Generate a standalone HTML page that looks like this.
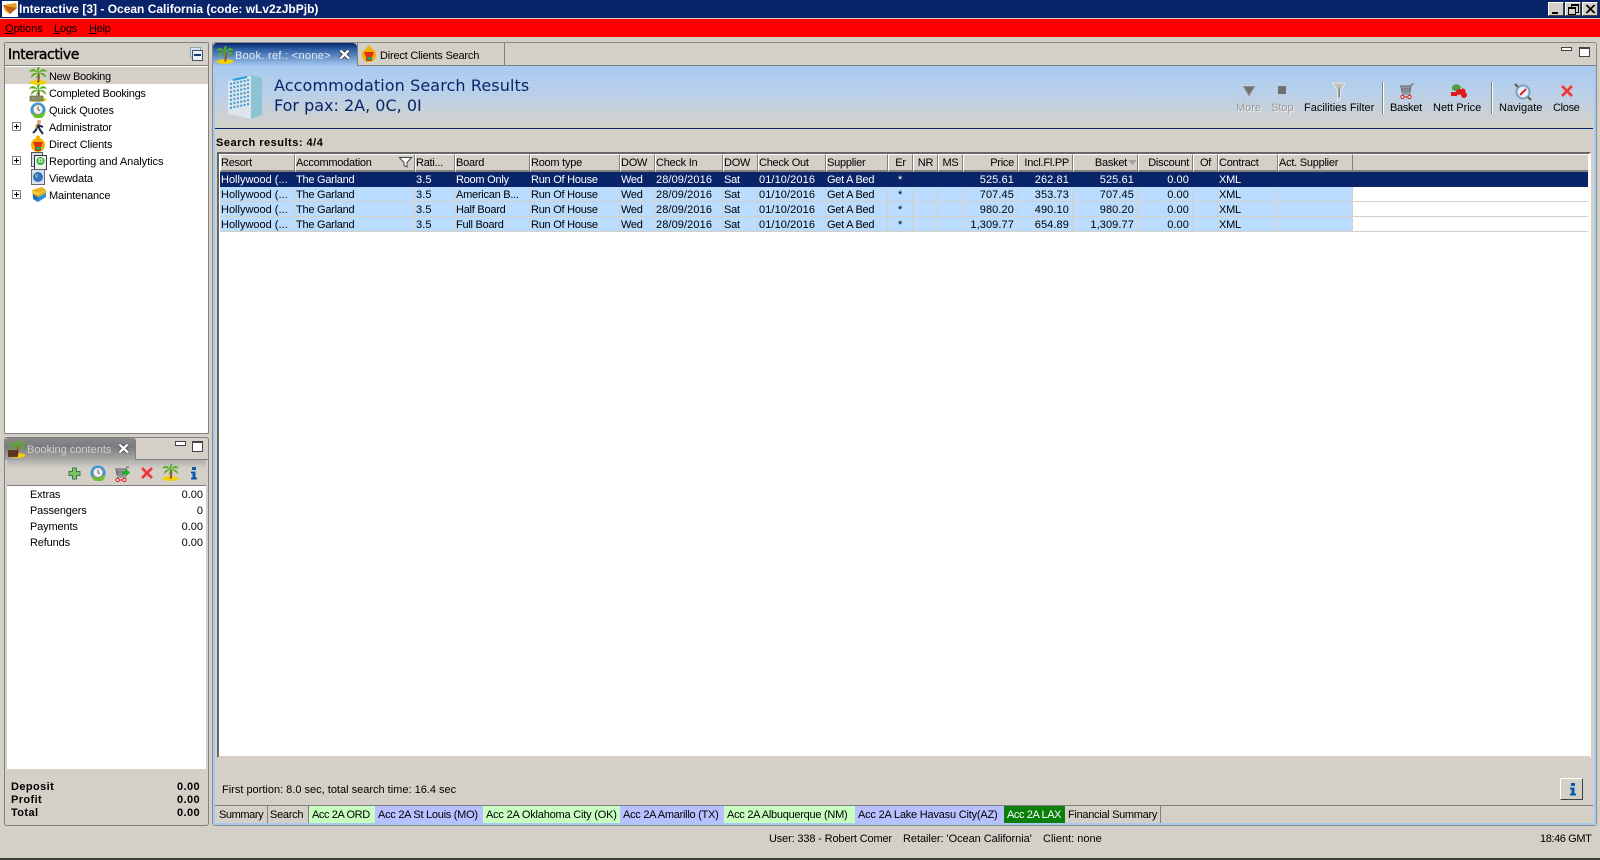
<!DOCTYPE html>
<html><head><meta charset="utf-8"><title>Interactive</title>
<style>
html,body{margin:0;padding:0;width:1600px;height:860px;overflow:hidden;background:#d4d0c8}
body{position:relative;font:11px "Liberation Sans",Arial,sans-serif;color:#000}
.a{position:absolute}
.t{position:absolute;white-space:nowrap;line-height:14px;height:14px;margin-top:1px}
.tr{letter-spacing:-.15px}
.tn{letter-spacing:-.27px}
.b{font-weight:bold}
.r{text-align:right}
svg{position:absolute;overflow:visible}
table{position:absolute;left:220px;top:154px;border-collapse:separate;border-spacing:0;table-layout:fixed;width:1133px;font:11px "Liberation Sans",Arial,sans-serif}
th{font-weight:normal;text-align:left;background:#d4d0c8;border-top:1px solid #fff;border-left:1px solid #fff;border-right:1px solid #808080;border-bottom:2px solid #808080;padding:2px 0 0 0;white-space:nowrap;overflow:hidden;box-sizing:border-box;height:18px;line-height:13px;letter-spacing:-.25px}
td{height:15px;box-sizing:border-box;background:#b9dcff;border-right:1px solid #d4d0c8;border-bottom:1px solid #d4d0c8;padding:2px 0 0 1px;white-space:nowrap;overflow:hidden;line-height:12px;letter-spacing:-.25px}
tr.s td{background:#0a246a;color:#fff;border-color:#0a246a}
td.d,td.n{letter-spacing:.1px}
td.h{letter-spacing:0}
td.n{text-align:right;padding:2px 3px 0 0}
th.n{text-align:right;padding:2px 3px 0 0}
td.c,th.c{text-align:center;padding:2px 0 0 0}
.wb{position:absolute;top:2px;width:16px;height:14px;box-sizing:border-box;background:#d4d0c8;border:1px solid;border-color:#fff #404040 #404040 #fff}
.bt{position:absolute;top:806px;height:17px;line-height:18px;box-sizing:border-box;padding-left:3px;white-space:nowrap;letter-spacing:-.27px}
.bt.g{background:#c8ffc0}
.bt.p{background:#b8c0ff}
.bt.l{border-right:1px solid #808080}
</style></head><body>
<svg width="0" height="0" style="position:absolute"><defs>
<symbol id="palm" viewBox="0 0 18 18"><ellipse cx="9" cy="15.500" rx="8.500" ry="2.400" fill="#f4d000"/><path d="M9.500 6C10 10 10 13 9 15.500" stroke="#8a5a20" stroke-width="2" fill="none"/><path d="M9.500 6C6 1 2 1 0 5 3 4 6 4 9.500 6ZM9.500 6C7 2 8 0 11 0 10 2 10 4 9.500 6ZM9.500 6C12 1 16 1 18 5 15 4 12 4 9.500 6ZM9.500 6C5 5 2 7 2 11 5 8 7 7 9.500 6ZM9.500 6C14 5 17 7 17 11 14 8 12 7 9.500 6ZM9.500 6C8 8 7 10 7 12 9 10 9.500 8 9.500 6Z" fill="#58ad20"/></symbol>
<symbol id="clock" viewBox="0 0 18 18"><circle cx="9" cy="9" r="8.500" fill="#2f9be8"/><path d="M2 12A7.500 7.500 0 0 0 17 11L13 13 9 15Z" fill="#6cc22a"/><circle cx="9" cy="8.500" r="5.600" fill="#f2f2f2" stroke="#888"/><path d="M9 5V8.500L11 10" stroke="#444" fill="none"/></symbol>
<symbol id="x" viewBox="0 0 14 14"><path d="M3 1 7 5 11 1 13 3 9 7 13 11 11 13 7 9 3 13 1 11 5 7 1 3Z" fill="#e8323c" stroke="#f08a8a" stroke-width=".7"/></symbol>
<symbol id="cart" viewBox="0 0 16 16"><path d="M1 3H12M2 3 3 9H11L12 3 13 1H15M4 3V9M6 3V9M8 3V9M10 3V9M2 6H12M3 11H12" stroke="#666" fill="none"/><circle cx="3.500" cy="14" r="1.600" fill="#fff" stroke="#e01010"/><circle cx="10.500" cy="14" r="1.600" fill="#fff" stroke="#e01010"/><path d="M5 14H9" stroke="#e01010"/></symbol>
<symbol id="client" viewBox="0 0 16 18"><circle cx="8" cy="10" r="7" fill="#f4b000"/><circle cx="8" cy="2.500" r="2" fill="#f4b000"/><path d="M3 7H13L11.500 11H4.500Z" fill="#e03010"/><path d="M5 11H11V16H5Z" fill="#e03010"/><rect x="6" y="12" width="5" height="3" fill="#20a060"/></symbol>
<symbol id="doc" viewBox="0 0 16 18"><rect x=".5" y=".5" width="11" height="14" fill="#d8dce8" stroke="#555"/><rect x="3.500" y="3.500" width="12" height="14" fill="#e8f0e8" stroke="#334"/><circle cx="9.500" cy="9" r="4" fill="#30b030"/><path d="M8 7H11V10H8ZM6 14H13" stroke="#fff" fill="none"/></symbol>
</defs></svg>

<!-- title bar -->
<div class="a" style="left:0;top:0;width:1600px;height:18px;background:#0a246a"></div>
<svg style="left:2px;top:1px" width="16" height="16"><rect width="16" height="16" fill="#fff"/><path d="M1 4 14 2 15 7 8 13 3 10Z" fill="#e8a020"/><path d="M1 4 9 6 15 7 8 13Z" fill="#c06010"/></svg>
<div class="t b" style="left:19px;top:2px;color:#fff;font-size:12px;margin-top:0">Interactive [3] - Ocean California (code: wLv2zJbPjb)</div>
<div class="wb" style="left:1548px"><div class="a" style="left:3px;top:9px;width:6px;height:2px;background:#000"></div></div>
<div class="wb" style="left:1565px"><div class="a" style="left:5px;top:1px;width:6px;height:6px;border:1px solid #000;border-top-width:2px"></div><div class="a" style="left:2px;top:4px;width:6px;height:5px;border:1px solid #000;border-top-width:2px;background:#d4d0c8"></div></div>
<div class="wb" style="left:1582px"><svg style="left:3px;top:2px" width="9" height="8"><path d="M0 0 8 8M1 0 9 8M8 0 0 8M9 0 1 8" stroke="#000"/></svg></div>

<!-- menu bar -->
<div class="a" style="left:0;top:18px;width:1600px;height:1px;background:#d4d0c8"></div>
<div class="a" style="left:0;top:19px;width:1600px;height:18px;background:#f00"></div>
<div class="t" style="left:5px;top:21px"><u>O</u>ptions</div>
<div class="t" style="left:54px;top:21px;letter-spacing:-.2px"><u>L</u>ogs</div>
<div class="t" style="left:89px;top:21px;letter-spacing:-.3px"><u>H</u>elp</div>

<!-- Interactive panel -->
<div class="a" style="left:4px;top:42px;width:205px;height:392px;box-sizing:border-box;border:1px solid #808080;border-radius:2px;background:#fff"></div>
<div class="a" style="left:5px;top:43px;width:203px;height:22px;background:#d4d0c8;border-bottom:1px solid #808080"></div>
<div class="t" style="left:8px;top:47px;font-size:14px;line-height:14px;font-family:'DejaVu Sans',sans-serif;-webkit-text-stroke:.4px #000;letter-spacing:-.4px">Interactive</div>
<svg style="left:190px;top:47px" width="14" height="15"><rect x=".5" y=".5" width="10" height="10" fill="#d4e4f4" stroke="#8aa"/><rect x="2.500" y="3.500" width="10" height="10" fill="#e8f0f8" stroke="#456"/><path d="M4 8H11" stroke="#103a70" stroke-width="2"/></svg>
<div class="a" style="left:5px;top:67px;width:203px;height:17px;background:#d4d0c8"></div>
<div class="t tn" style="left:49px;top:69px">New Booking</div>
<div class="t tn" style="left:49px;top:86px">Completed Bookings</div>
<div class="t tr" style="left:49px;top:103px">Quick Quotes</div>
<div class="t tr" style="left:49px;top:120px">Administrator</div>
<div class="t tr" style="left:49px;top:137px">Direct Clients</div>
<div class="t" style="left:49px;top:154px;letter-spacing:-.05px">Reporting and Analytics</div>
<div class="t tr" style="left:49px;top:171px">Viewdata</div>
<div class="t tr" style="left:49px;top:188px">Maintenance</div>
<svg width="18" height="18" style="left:29px;top:67px"><use href="#palm"/></svg>
<svg width="18" height="18" style="left:29px;top:84px"><use href="#palm"/><rect x="1" y="12" width="13" height="5" fill="#8c9060" stroke="#555" stroke-width=".6"/></svg>
<svg width="16" height="16" style="left:30px;top:102px"><use href="#clock"/></svg>
<svg width="16" height="17" style="left:31px;top:119px"><circle cx="8" cy="3" r="2" fill="#e0a070"/><path d="M7 5 5 11 2 14M7 6 9 11 12 15M7 6 12 8" stroke="#1a2a50" stroke-width="2" fill="none"/><path d="M4 6 7 5 5 10Z" fill="#e0b030"/></svg>
<svg width="16" height="18" style="left:30px;top:135px"><use href="#client"/></svg>
<svg width="16" height="18" style="left:31px;top:152px"><use href="#doc"/></svg>
<svg width="15" height="16" style="left:31px;top:169px"><rect x=".5" y=".5" width="13" height="15" fill="#dce0ec" stroke="#667"/><circle cx="7" cy="8" r="5" fill="#3070c8"/><path d="M4 6C6 4 8 6 7 8S4 9 4 6Z" fill="#70b060"/></svg>
<svg width="16" height="17" style="left:31px;top:186px"><path d="M1 4 11 1 15 4 15 10 7 15 2 12Z" fill="#e8b020"/><path d="M1 4 7 7 15 4 7 9 2 7Z" fill="#f8d040"/><path d="M2 8 7 11V16L2 13Z" fill="#2070c0"/><path d="M7 11 15 7V11L7 16Z" fill="#3090d0"/></svg>
<!-- tree expanders -->
<div class="a" style="left:12px;top:122px;width:9px;height:9px;box-sizing:border-box;border:1px solid #808080;background:linear-gradient(#000,#000) center/5px 1px no-repeat,linear-gradient(#000,#000) center/1px 5px no-repeat,#fff"></div>
<div class="a" style="left:12px;top:156px;width:9px;height:9px;box-sizing:border-box;border:1px solid #808080;background:linear-gradient(#000,#000) center/5px 1px no-repeat,linear-gradient(#000,#000) center/1px 5px no-repeat,#fff"></div>
<div class="a" style="left:12px;top:190px;width:9px;height:9px;box-sizing:border-box;border:1px solid #808080;background:linear-gradient(#000,#000) center/5px 1px no-repeat,linear-gradient(#000,#000) center/1px 5px no-repeat,#fff"></div>

<!-- Booking contents panel -->
<div class="a" style="left:4px;top:437px;width:205px;height:389px;box-sizing:border-box;border:1px solid #808080;border-radius:3px;background:#d4d0c8"></div>
<div class="a" style="left:135px;top:459px;width:73px;height:1px;background:#808080"></div>
<div class="a" style="left:5px;top:438px;width:130px;height:22px;background:linear-gradient(#8a8a8e,#7c7c80 40%,#a9a8a6);border-radius:3px 3px 0 0;border-right:1px solid #808080"></div>
<div class="a" style="left:7px;top:460px;width:199px;height:26px;background:linear-gradient(#b0afad,#d4d0c8 35%);border-bottom:1px solid #808080;box-sizing:border-box"></div>
<div class="t" style="left:27px;top:442px;color:#d4d0c8">Booking contents</div>
<svg width="18" height="18" style="left:8px;top:440px"><use href="#palm"/><rect x="0" y="10" width="10" height="7" rx="1" fill="#5c3420"/></svg>
<svg width="12" height="11" style="left:118px;top:443px"><path d="M1.500 1.500 10 9.500M9.500 1.500 1.500 9.500" stroke="#444" stroke-width="4"/><path d="M1.500 1.500 10 9.500M9.500 1.500 1.500 9.500" stroke="#fff" stroke-width="2.400"/></svg>
<div class="a" style="left:175px;top:441px;width:9px;height:3px;background:#fff;border:1px solid #444"></div>
<div class="a" style="left:192px;top:441px;width:9px;height:8px;box-sizing:content-box;background:#fff;border:1px solid #444;border-top-width:2px"></div>
<svg width="13" height="13" style="left:68px;top:467px"><path d="M4.500 1H8.500V4.500H12V8.500H8.500V12H4.500V8.500H1V4.500H4.500Z" fill="#80c060" stroke="#3a7a50"/></svg>
<svg width="16" height="16" style="left:90px;top:465px"><use href="#clock"/></svg>
<svg width="16" height="16" style="left:114px;top:466px"><use href="#cart"/><path d="M8 5H12V2.500L16 6.500 12 10.500V8H8Z" fill="#20b030"/></svg>
<svg width="14" height="14" style="left:140px;top:466px"><use href="#x"/></svg>
<svg width="17" height="17" style="left:162px;top:464px"><use href="#palm"/></svg>
<svg width="8" height="14" style="left:190px;top:466px"><path d="M2 1H6V4H2ZM1 5.500H5.500V11.500H7V13.500H1V11.500H2.500V7.500H1Z" fill="#0a5aa8"/></svg>
<div class="a" style="left:7px;top:486px;width:199px;height:283px;background:#fff"></div>
<div class="t tr" style="left:30px;top:487px">Extras</div><div class="t" style="right:1397px;top:487px">0.00</div>
<div class="t tr" style="left:30px;top:503px">Passengers</div><div class="t" style="right:1397px;top:503px">0</div>
<div class="t tr" style="left:30px;top:519px">Payments</div><div class="t" style="right:1397px;top:519px">0.00</div>
<div class="t tr" style="left:30px;top:535px">Refunds</div><div class="t" style="right:1397px;top:535px">0.00</div>
<div class="t b" style="left:11px;top:779px;letter-spacing:.4px">Deposit</div><div class="t b" style="right:1400px;top:779px;letter-spacing:.4px">0.00</div>
<div class="t b" style="left:11px;top:792px;letter-spacing:.4px">Profit</div><div class="t b" style="right:1400px;top:792px;letter-spacing:.4px">0.00</div>
<div class="t b" style="left:11px;top:805px;letter-spacing:.4px">Total</div><div class="t b" style="right:1400px;top:805px;letter-spacing:.4px">0.00</div>

<!-- Main panel -->
<div class="a" style="left:212px;top:42px;width:1385px;height:784px;box-sizing:border-box;border:1px solid #8c8a85;border-radius:3px;background:#d4d0c8"></div>
<div class="a" style="left:213px;top:65px;width:1383px;height:1px;background:#808080"></div>
<div class="a" style="left:213px;top:66px;width:2px;height:759px;background:#a6caf0"></div>
<div class="a" style="left:1594px;top:66px;width:2px;height:759px;background:#a6caf0"></div>
<div class="a" style="left:213px;top:823px;width:1383px;height:2px;background:#a6caf0"></div>
<div class="a" style="left:215px;top:66px;width:1379px;height:62px;background:repeating-linear-gradient(0deg,rgba(255,255,255,.06) 0 1px,transparent 1px 3px),linear-gradient(#a6caf0,#b8cfe8 45%,#d4d0c8)"></div>
<div class="a" style="left:215px;top:128px;width:1378px;height:1px;background:#0a246a"></div>

<!-- tabs -->
<div class="a" style="left:213px;top:43px;width:144px;height:23px;background:linear-gradient(#0a246a,#2a5aa0 25%,#a6caf0);border-radius:4px 4px 0 0"></div>
<svg width="18" height="18" style="left:216px;top:46px"><use href="#palm"/></svg>
<div class="t" style="left:235px;top:48px;color:#e8eef8;letter-spacing:.3px">Book. ref.: &lt;none&gt;</div>
<svg width="12" height="11" style="left:339px;top:49px"><path d="M1.500 1.500 10 9.500M9.500 1.500 1.500 9.500" stroke="#333" stroke-width="4"/><path d="M1.500 1.500 10 9.500M9.500 1.500 1.500 9.500" stroke="#fff" stroke-width="2.400"/></svg>
<div class="a" style="left:357px;top:43px;width:148px;height:22px;box-sizing:border-box;border-right:1px solid #808080;border-left:1px solid #808080;background:#d4d0c8"></div>
<svg width="16" height="18" style="left:361px;top:45px"><use href="#client"/></svg>
<div class="t" style="left:380px;top:48px;letter-spacing:-.2px">Direct Clients Search</div>
<div class="a" style="left:1561px;top:47px;width:9px;height:2px;background:#fff;border:1px solid #444"></div>
<div class="a" style="left:1579px;top:47px;width:9px;height:7px;background:#fff;border:1px solid #444;border-top-width:2px"></div>

<!-- header -->
<svg width="36" height="48" style="left:227px;top:73px"><path d="M1 8 25 2 35 5 35 42 23 46 1 41Z" fill="#a8c0c8"/><path d="M24 2 35 5V42L24 46Z" fill="#8cc4d4"/><path d="M1 8 24 3V46L1 41Z" fill="#dde4ea"/><g stroke="#3a9ad8" stroke-width="2" stroke-dasharray="2 1.500"><path d="M3 11 22 7M3 15 22 11M3 19 22 15M3 23 22 19M3 27 22 23M3 31 22 27M3 35 22 31"/></g><path d="M6 7 20 4" stroke="#20a0e0" stroke-width="2"/></svg>
<div class="t" style="left:274px;top:75px;height:20px;line-height:20px;font-size:16px;color:#0a246a;font-family:'DejaVu Sans',sans-serif;letter-spacing:.1px">Accommodation Search Results</div>
<div class="t" style="left:274px;top:95px;height:20px;line-height:20px;font-size:16px;color:#0a246a;font-family:'DejaVu Sans',sans-serif">For pax: 2A, 0C, 0I</div>

<!-- toolbar -->
<svg width="12" height="10" style="left:1243px;top:86px"><path d="M.500 .500H11.500L6 9.500Z" fill="#707070" stroke="#909090"/></svg>
<div class="a" style="left:1278px;top:86px;width:8px;height:8px;background:#707070;border:0"></div>
<svg width="14" height="20" style="left:1332px;top:82px"><path d="M1 1H13L8.500 9V16L5.500 19V9Z" fill="#c0c0c0" stroke="#e8e8e8"/><path d="M7 3 8 9V15H6.500V9Z" fill="#808080"/></svg>
<div class="t" style="left:1236px;top:100px"><span style="color:#9a9a9a;text-shadow:1px 1px 0 #eee">More</span></div>
<div class="t" style="left:1271px;top:100px"><span style="color:#9a9a9a;text-shadow:1px 1px 0 #eee">Stop</span></div>
<div class="t" style="left:1304px;top:100px">Facilities Filter</div>
<div class="a" style="left:1382px;top:82px;width:1px;height:32px;background:#808080;border-right:1px solid #fff"></div>
<svg width="16" height="16" style="left:1399px;top:83px"><use href="#cart"/></svg>
<div class="t" style="left:1390px;top:100px;letter-spacing:-.3px">Basket</div>
<svg width="18" height="16" style="left:1450px;top:83px"><path d="M2 6C1 2 6 0 9 2 12 3 11 7 8 8 6 8 3 8 2 6Z" fill="#50a040"/><circle cx="9" cy="9" r="3" fill="#e01818"/><circle cx="13" cy="8" r="2.500" fill="#e01818"/><circle cx="14" cy="12" r="3" fill="#e01818"/><rect x="1" y="9" width="6" height="4" fill="#e01818"/></svg>
<div class="t" style="left:1433px;top:100px">Nett Price</div>
<div class="a" style="left:1491px;top:82px;width:1px;height:32px;background:#808080;border-right:1px solid #fff"></div>
<svg width="18" height="18" style="left:1514px;top:83px"><circle cx="9" cy="9" r="6.500" fill="#e8eef4" stroke="#7aa0c8" stroke-width="2"/><path d="M6 12 12 6" stroke="#e02020" stroke-width="2"/><path d="M1 1 4 4M14 14 17 17" stroke="#6a5030" stroke-width="2"/></svg>
<div class="t" style="left:1499px;top:100px">Navigate</div>
<svg width="14" height="14" style="left:1560px;top:84px"><use href="#x"/></svg>
<div class="t" style="left:1553px;top:100px;letter-spacing:-.3px">Close</div>

<div class="t b" style="left:216px;top:135px;letter-spacing:.5px">Search results: 4/4</div>

<!-- grid -->
<div class="a" style="left:217px;top:152px;width:1374px;height:606px;box-sizing:border-box;border:2px solid;border-color:#666 #fff #d4d0c8 #666;background:#fff"></div>
<div class="a" style="left:220px;top:154px;width:1368px;height:18px;box-sizing:border-box;background:#d4d0c8;border-top:1px solid #fff;border-bottom:2px solid #808080"></div>
<div class="a" style="left:1353px;top:187px;width:235px;height:45px;background:repeating-linear-gradient(transparent 0 14px,#d4d0c8 14px 15px)"></div>
<div class="a" style="left:1353px;top:172px;width:235px;height:15px;background:#0a246a"></div>
<table><colgroup><col style="width:75px"><col style="width:120px"><col style="width:40px"><col style="width:75px"><col style="width:90px"><col style="width:35px"><col style="width:68px"><col style="width:35px"><col style="width:68px"><col style="width:62px"><col style="width:25px"><col style="width:25px"><col style="width:25px"><col style="width:55px"><col style="width:55px"><col style="width:65px"><col style="width:55px"><col style="width:25px"><col style="width:60px"><col style="width:75px"></colgroup>
<tr><th>Resort</th><th>Accommodation</th><th>Rati...</th><th>Board</th><th>Room type</th><th>DOW</th><th>Check In</th><th>DOW</th><th>Check Out</th><th>Supplier</th><th class="c">Er</th><th class="c">NR</th><th class="c">MS</th><th class="n">Price</th><th class="n">Incl.Fl.PP</th><th class="n" style="padding-right:10px">Basket</th><th class="n">Discount</th><th class="c">Of</th><th>Contract</th><th>Act. Supplier</th></tr>
<tr class="s"><td class="h">Hollywood (...</td><td>The Garland</td><td class="d">3.5</td><td>Room Only</td><td>Run Of House</td><td>Wed</td><td class="d">28/09/2016</td><td>Sat</td><td class="d">01/10/2016</td><td>Get A Bed</td><td class="c">*</td><td></td><td></td><td class="n">525.61</td><td class="n">262.81</td><td class="n">525.61</td><td class="n">0.00</td><td></td><td>XML</td><td></td></tr>
<tr><td class="h">Hollywood (...</td><td>The Garland</td><td class="d">3.5</td><td>American B...</td><td>Run Of House</td><td>Wed</td><td class="d">28/09/2016</td><td>Sat</td><td class="d">01/10/2016</td><td>Get A Bed</td><td class="c">*</td><td></td><td></td><td class="n">707.45</td><td class="n">353.73</td><td class="n">707.45</td><td class="n">0.00</td><td></td><td>XML</td><td></td></tr>
<tr><td class="h">Hollywood (...</td><td>The Garland</td><td class="d">3.5</td><td>Half Board</td><td>Run Of House</td><td>Wed</td><td class="d">28/09/2016</td><td>Sat</td><td class="d">01/10/2016</td><td>Get A Bed</td><td class="c">*</td><td></td><td></td><td class="n">980.20</td><td class="n">490.10</td><td class="n">980.20</td><td class="n">0.00</td><td></td><td>XML</td><td></td></tr>
<tr><td class="h">Hollywood (...</td><td>The Garland</td><td class="d">3.5</td><td>Full Board</td><td>Run Of House</td><td>Wed</td><td class="d">28/09/2016</td><td>Sat</td><td class="d">01/10/2016</td><td>Get A Bed</td><td class="c">*</td><td></td><td></td><td class="n">1,309.77</td><td class="n">654.89</td><td class="n">1,309.77</td><td class="n">0.00</td><td></td><td>XML</td><td></td></tr>
</table>
<svg width="13" height="11" style="left:399px;top:157px"><path d="M.500 .500H12.500L8 5.500V10L5 8.500V5.500Z" fill="#fff" stroke="#444"/></svg>
<svg width="9" height="5" style="left:1128px;top:160px"><path d="M0 0H9L4.500 5Z" fill="#a0a0a0"/></svg>

<!-- footer -->
<div class="t" style="left:222px;top:782px">First portion: 8.0 sec, total search time: 16.4 sec</div>
<div class="a" style="left:1560px;top:778px;width:23px;height:22px;box-sizing:border-box;border:1px solid;border-color:#fff #404040 #404040 #fff;background:#d4d0c8"><svg width="8" height="13" style="left:8px;top:4px"><path d="M2 0H6V3H2ZM1 4.500H5.500V10.500H7V12.500H1V10.500H2.500V6.500H1Z" fill="#0a5aa8"/></svg></div>
<div class="a" style="left:215px;top:805px;width:1378px;height:1px;background:#808080"></div>
<div class="bt l" style="left:217px;width:51px;padding-left:2px;letter-spacing:-.4px">Summary</div>
<div class="bt l" style="left:268px;width:41px;padding-left:2px">Search</div>
<div class="bt g" style="left:309px;width:66px;letter-spacing:-.4px">Acc 2A ORD</div>
<div class="bt p" style="left:375px;width:108px">Acc 2A St Louis (MO)</div>
<div class="bt g" style="left:483px;width:137px;letter-spacing:-.2px">Acc 2A Oklahoma City (OK)</div>
<div class="bt p" style="left:620px;width:104px;padding-left:3px">Acc 2A Amarillo (TX)</div>
<div class="bt g" style="left:724px;width:131px;padding-left:3px">Acc 2A Albuquerque (NM)</div>
<div class="bt p" style="left:855px;width:149px;letter-spacing:-.2px">Acc 2A Lake Havasu City(AZ)</div>
<div class="bt" style="left:1004px;width:61px;background:#0a800a;color:#fff;letter-spacing:-.4px;padding-left:3px">Acc 2A LAX</div>
<div class="bt l" style="left:1065px;width:96px;letter-spacing:-.3px">Financial Summary</div>

<!-- status -->
<div class="t" style="left:769px;top:831px;letter-spacing:-.15px">User: 338 - Robert Comer</div>
<div class="t" style="left:903px;top:831px;letter-spacing:-.05px">Retailer: 'Ocean California'</div>
<div class="t" style="left:1043px;top:831px">Client: none</div>
<div class="t" style="left:1540px;top:831px;letter-spacing:-.4px">18:46 GMT</div>
<div class="a" style="left:0;top:858px;width:1600px;height:2px;background:#404040"></div>
</body></html>
